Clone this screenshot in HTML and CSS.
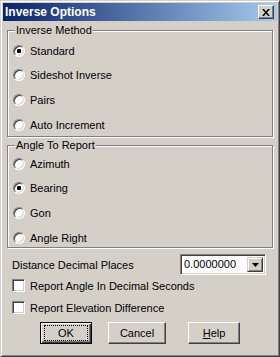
FILE: index.html
```html
<!DOCTYPE html>
<html lang="en">
<head>
    <meta charset="UTF-8">
    <title>Inverse Options</title>
    <link rel="stylesheet" href="styles.css">
</head>
<body>
    <div class="window">
        <div class="titlebar">
            <span class="title">Inverse Options</span>
            <button class="close" aria-label="Close">
                <svg width="8" height="7" viewBox="0 0 8 7">
                    <path d="M0 0h2l2 2.5L6 0h2L5 3.5 8 7H6L4 4.5 2 7H0l3-3.5z" fill="#000"/>
                </svg>
            </button>
        </div>

        <div class="content">
            <fieldset class="group group-method">
                <legend>Inverse Method</legend>
                <label class="option"><input type="radio" name="method" checked>Standard</label>
                <label class="option"><input type="radio" name="method">Sideshot Inverse</label>
                <label class="option"><input type="radio" name="method">Pairs</label>
                <label class="option"><input type="radio" name="method">Auto Increment</label>
            </fieldset>

            <fieldset class="group group-angle">
                <legend>Angle To Report</legend>
                <label class="option"><input type="radio" name="angle">Azimuth</label>
                <label class="option"><input type="radio" name="angle" checked>Bearing</label>
                <label class="option"><input type="radio" name="angle">Gon</label>
                <label class="option"><input type="radio" name="angle">Angle Right</label>
            </fieldset>

            <div class="places-row">
                <span>Distance Decimal Places</span>
                <div class="combo">
                    <span class="combo-value">0.0000000</span>
                    <span class="combo-btn">
                        <svg width="7" height="4" viewBox="0 0 7 4"><path d="M0 0h7L3.5 4z" fill="#000"/></svg>
                    </span>
                </div>
            </div>

            <label class="check"><input type="checkbox">Report Angle In Decimal Seconds</label>
            <label class="check check-last"><input type="checkbox">Report Elevation Difference</label>

            <div class="buttons">
                <button class="btn btn-default btn-ok"><span class="focus">OK</span></button>
                <button class="btn btn-cancel">Cancel</button>
                <button class="btn btn-help"><u>H</u>elp</button>
            </div>
        </div>
    </div>
</body>
</html>
```

FILE: styles.css
```css
body {
    margin: 0;
    font-family: "Liberation Sans", Arial, sans-serif;
    font-size: 11px;
    color: #000;
    background-color: #D4D0C8;
}
.window {
    width: 280px;
    height: 357px;
    box-sizing: border-box;
    border: 1px solid;
    border-color: #D4D0C8 #404040 #404040 #D4D0C8;
    box-shadow: inset 1px 1px #fff, inset -1px -1px #808080;
    padding: 2px;
    background-color: #D4D0C8;
}
.titlebar {
    height: 18px;
    display: flex;
    align-items: center;
    justify-content: space-between;
    padding: 0 3px 0 2px;
    background: linear-gradient(to right, #0A246A, #A6CAF0);
}
.title {
    color: #fff;
    font-weight: bold;
    font-size: 12px;
}
.close {
    width: 16px;
    height: 14px;
    padding: 0;
    display: flex;
    align-items: center;
    justify-content: center;
    background-color: #D4D0C8;
    border: 1px solid;
    border-color: #fff #404040 #404040 #fff;
    box-shadow: inset -1px -1px #808080;
}
.content {
    padding: 2px 4px 0 4px;
}
.group {
    margin: 0;
    padding: 0 0 0 5px;
    min-width: 0;
    border: 1px solid #808080;
    box-shadow: inset 1px 1px #fff, 1px 1px #fff;
    display: flex;
    flex-direction: column;
    gap: 11.7px;
}
.group legend {
    line-height: 14px;
    padding: 0 1px;
    margin-left: 2px;
    background-color: #D4D0C8;
}
.group-method {
    padding-top: 7px;
    padding-bottom: 5px;
}
.group-angle {
    margin-top: 1px;
    padding-top: 5px;
    padding-bottom: 3px;
}
.option, .check {
    display: flex;
    align-items: center;
    height: 13px;
}
.option input {
    appearance: none;
    -webkit-appearance: none;
    width: 12px;
    height: 12px;
    margin: 0 5px 0 0;
    border-radius: 50%;
    border: 1px solid;
    border-color: #808080 #fff #fff #808080;
    box-shadow: inset 1px 1px #404040, inset -1px -1px #D4D0C8;
    background-color: #fff;
}
.option input:checked {
    background: radial-gradient(circle, #000 0 2px, #fff 2.5px);
}
.places-row {
    display: flex;
    align-items: center;
    justify-content: space-between;
    height: 21px;
    margin: 6px 7px 0 5px;
}
.combo {
    width: 86px;
    height: 21px;
    box-sizing: border-box;
    display: flex;
    border: 1px solid;
    border-color: #808080 #fff #fff #808080;
    box-shadow: inset 1px 1px #404040, inset -1px -1px #D4D0C8;
    padding: 2px;
    background-color: #fff;
}
.combo-value {
    flex: 1;
    line-height: 15px;
    padding-left: 1px;
}
.combo-btn {
    width: 16px;
    box-sizing: border-box;
    display: flex;
    align-items: center;
    justify-content: center;
    background-color: #D4D0C8;
    border: 1px solid;
    border-color: #D4D0C8 #404040 #404040 #D4D0C8;
    box-shadow: inset 1px 1px #fff, inset -1px -1px #808080;
}
.check {
    margin: 4px 0 0 5px;
}
.check-last {
    margin-top: 9px;
}
.check input {
    appearance: none;
    -webkit-appearance: none;
    width: 13px;
    height: 13px;
    margin: 0 5px 0 0;
    border: 1px solid;
    border-color: #808080 #fff #fff #808080;
    box-shadow: inset 1px 1px #404040, inset -1px -1px #D4D0C8;
    background-color: #fff;
}
.buttons {
    display: flex;
    margin: 8px 0 0 33px;
}
.btn {
    height: 22px;
    padding: 0;
    font-family: inherit;
    font-size: 11px;
    color: #000;
    background-color: #D4D0C8;
    border: 1px solid;
    border-color: #fff #404040 #404040 #fff;
    box-shadow: inset -1px -1px #808080;
    display: flex;
    align-items: center;
    justify-content: center;
}
.btn-default {
    border-color: #000;
    box-shadow: inset 1px 1px #fff, inset -1px -1px #404040, inset -2px -2px #808080;
}
.focus {
    display: flex;
    align-items: center;
    justify-content: center;
    width: 42px;
    height: 14px;
    border: 1px dotted #000;
}
.btn-ok {
    width: 52px;
}
.btn-cancel {
    width: 58px;
    margin-left: 16px;
}
.btn-help {
    width: 52px;
    margin-left: 22px;
}
```
